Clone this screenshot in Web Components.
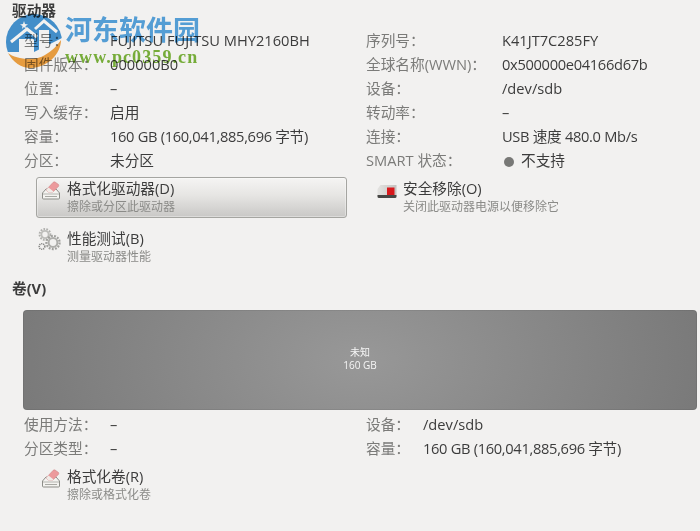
<!DOCTYPE html>
<html>
<head>
<meta charset="utf-8">
<style>
  html, body { margin: 0; padding: 0; background: #f2f1f0; overflow: hidden; }
  body {
    width: 700px; height: 531px; position: relative;
    font-family: "Open Sans", "Noto Sans CJK SC", sans-serif;
    font-size: 14.67px; color: #3c3c3c;
  }
</style>
</head>
<body>
<disk-page></disk-page>
<site-mark></site-mark>

<template id="eraser">
  <svg width="20" height="20" viewBox="0 0 20 20">
    <path d="M1.5 13 L5 9 H15 L18.5 13 V18 Q18.5 19 17.5 19 H2.5 Q1.5 19 1.5 18 Z" fill="#f4f3f0" stroke="#8d8d88"/>
    <path d="M2 14 H18" stroke="#b5b5b0"/>
    <path d="M4 16.5 H16" stroke="#a8a8a3"/>
    <path d="M5 10 L12 2.5 Q13 1.5 14 2 L17.5 4.5 Q18 5.5 17.5 6.2 L12 12 H7 Z" fill="#ec9a9c" stroke="#cf8486" stroke-width=".6"/>
    <path d="M5 10 L7.5 7.5 L12.5 11.5 L12 12 H7 Z" fill="#f0ece8"/>
  </svg>
</template>

<script>
  class InfoRows extends HTMLElement {
    constructor() {
      super();
      this.attachShadow({ mode: "open" });
      this.shadowRoot.innerHTML = `
        <style>
          :host { display: grid; grid-auto-rows: 24px; align-items: center; line-height: 24px; white-space: nowrap; }
          ::slotted(span:nth-child(odd)) { color: #7b7b79; }
        </style>
        <slot></slot>`;
    }
  }

  class ActionItem extends HTMLElement {
    constructor() {
      super();
      this.attachShadow({ mode: "open" });
    }
    connectedCallback() { this.render(); }
    render() {
      const title = this.getAttribute("title") || "";
      const sub = this.getAttribute("sub") || "";
      const icon = this.getAttribute("icon") || "eraser";
      this.shadowRoot.innerHTML = `
        <style>
          :host { display: block; box-sizing: border-box; height: 41px; border: 1px solid transparent; border-radius: 3px; }
          :host([pressed]) {
            border-color: #a5a5a1;
            background: linear-gradient(#f5f4f3, #e6e5e3 45%, #c9c8c6);
            box-shadow: inset 0 0 0 1px rgba(255,255,255,.35);
          }
          .item { display: flex; gap: 6px; padding: 0 0 0 4px; }
          .icon { width: 20px; height: 20px; margin-top: 2px; flex: none; }
          .icon svg { overflow: visible; }
          .t { font-size: 14.67px; line-height: 21px; margin-bottom: 1px; color: #3c3c3c; white-space: nowrap; }
          .s { font-size: 12px; line-height: 14px; color: #8b8b88; white-space: nowrap; }
        </style>
        <div class="item">
          <div class="icon"></div>
          <div><div class="t">${title}</div><div class="s">${sub}</div></div>
        </div>`;
      const holder = this.shadowRoot.querySelector(".icon");
      if (icon === "eraser") {
        holder.append(document.getElementById("eraser").content.cloneNode(true));
      } else if (icon === "gears") {
        holder.innerHTML = `<svg width="20" height="20" viewBox="0 0 20 20" fill="none">
          <circle cx="4" cy="4.5" r="5.4" stroke="#b0b0ad" stroke-width="2" stroke-dasharray="1.7 1.2"/>
          <circle cx="4" cy="4.5" r="3.6" stroke="#bdbdba" stroke-width="1.8"/>
          <circle cx="12" cy="12.5" r="6.6" stroke="#a0a09d" stroke-width="2.2" stroke-dasharray="1.9 1.3"/>
          <circle cx="12" cy="12.5" r="4.4" stroke="#aeaeab" stroke-width="2"/>
          <circle cx="1" cy="16.5" r="2.8" stroke="#8a8a88" stroke-width="1.6" stroke-dasharray="1.2 .8"/>
        </svg>`;
      } else {
        holder.innerHTML = `<svg width="20" height="20" viewBox="0 0 20 20">
          <defs><linearGradient id="b" x1="0" y1="0" x2="1" y2="0"><stop offset="0" stop-color="#e4e3e1"/><stop offset="1" stop-color="#c4c3c0"/></linearGradient></defs>
          <path d="M3.5 5 H19.5 V16 H0.5 V9 Z" fill="url(#b)"/>
          <path d="M0.5 15 H19.5 V16.5 Q19.5 18 18 18 H2 Q0.5 18 0.5 16.5 Z" fill="#474745"/>
          <rect x="10" y="7.5" width="7.5" height="7.5" fill="#d8181c"/>
        </svg>`;
      }
    }
  }

  class VolumeBar extends HTMLElement {
    constructor() {
      super();
      this.attachShadow({ mode: "open" });
      this.shadowRoot.innerHTML = `
        <style>
          :host {
            display: flex; flex-direction: column; align-items: center; justify-content: center;
            box-sizing: border-box; height: 100px; padding-bottom: 2px;
            border-radius: 4px; color: #f6f6f6; font-size: 10px; line-height: 13px;
            background: radial-gradient(ellipse 340px 200px at 50% 50%, #989898, #7a7a7a);
            box-shadow: inset 0 0 0 1px rgba(0,0,0,.06);
          }
        </style>
        <slot></slot>`;
    }
  }

  class SiteMark extends HTMLElement {
    constructor() {
      super();
      this.attachShadow({ mode: "open" });
      this.shadowRoot.innerHTML = `
        <style>
          :host { position: absolute; left: 5px; top: 14px; width: 200px; height: 56px; pointer-events: none; mix-blend-mode: multiply; }
          svg { position: absolute; left: 0; top: 0; }
          .name {
            position: absolute; left: 60px; top: 0; white-space: nowrap;
            font: bold 27px/30px "Noto Sans CJK SC", sans-serif; color: #58a6e2;
          }
          .url {
            position: absolute; left: 60px; top: 33px; white-space: nowrap;
            font: bold 18px/20px "Liberation Serif", serif; color: #7cb63c; letter-spacing: 1.1px;
          }
        </style>
        <svg width="58" height="56" viewBox="0 0 58 56">
          <defs><clipPath id="top"><rect x="0" y="0" width="60" height="38"/></clipPath></defs>
          <circle cx="29" cy="28" r="28" fill="#4696d6" clip-path="url(#top)"/>
          <path d="M14 25 H29 V38 H14 Z M34 16 H44 V38 H34 Z" fill="#fff"/>
          <path d="M3 38 L29 38 L57 24 V38 H3 Z" fill="#fff"/>
          <path d="M6 28 L22 15 L32 23 M30 15 L39 7 L52 18" fill="none" stroke="#fff" stroke-width="3"/>
          <path d="M19 7 L20 10 L23 10.5 L20.5 12 L21 15 L19 13 L17 15 L17.5 12 L15 10.5 L18 10 Z" fill="#fff"/>
          <path d="M3 39 C10 45 30 48 40 41 C47 37 52 32 56 26 C56 40 42 54 26 54 C16 54 8 48 3 39 Z" fill="#f3a544"/>
        </svg>
        <div class="name">河东软件园</div>
        <div class="url">www.pc0359.cn</div>`;
    }
  }

  class DiskPage extends HTMLElement {
    constructor() {
      super();
      this.attachShadow({ mode: "open" });
      this.shadowRoot.innerHTML = `
        <style>
          :host { display: block; padding: 0 3px 0 12px; }
          h2 { margin: 0; font-size: 14.67px; font-weight: 700; color: #3c3c3c; line-height: 20px; }
          .body { padding-left: 12px; }
          .drive { display: grid; grid-template-columns: 86px 256px 136px 1fr; margin-top: 8px; }
          .vol { display: grid; grid-template-columns: 86px 256px 57px 1fr; margin-top: 2px; }
          .tight { letter-spacing: -.32px; }
          .actions { display: grid; grid-template-columns: 311px 1fr; column-gap: 25px; margin: 5px 0 0 12px; }
          .actions.two { margin-top: 9px; }
          .v { margin-top: 10px; }
          volume-bar { margin: 12px 0 0 -1px; }
          .last { width: 311px; margin: 5px 0 0 12px; }
          .dot { display: inline-block; width: 10px; height: 10px; border-radius: 50%; background: #787876; margin: 0 7px 0 2px; vertical-align: -1px; }
        </style>
        <h2>驱动器</h2>
        <div class="body">
          <info-rows class="drive">
            <span>型号：</span><span>FUJITSU FUJITSU MHY2160BH</span><span>序列号：</span><span>K41JT7C285FY</span>
            <span>固件版本：</span><span>000000B0</span><span>全球名称(WWN)：</span><span class="tight">0x500000e04166d67b</span>
            <span>位置：</span><span>–</span><span>设备：</span><span>/dev/sdb</span>
            <span>写入缓存：</span><span>启用</span><span>转动率：</span><span>–</span>
            <span>容量：</span><span class="tight">160 GB (160,041,885,696 字节)</span><span>连接：</span><span class="tight">USB 速度 480.0 Mb/s</span>
            <span>分区：</span><span>未分区</span><span>SMART 状态：</span><span><i class="dot"></i>不支持</span>
          </info-rows>
          <div class="actions">
            <action-item pressed title="格式化驱动器(D)" sub="擦除或分区此驱动器" icon="eraser"></action-item>
            <action-item title="安全移除(O)" sub="关闭此驱动器电源以便移除它" icon="eject"></action-item>
          </div>
          <div class="actions two">
            <action-item title="性能测试(B)" sub="测量驱动器性能" icon="gears"></action-item>
          </div>
        </div>
        <h2 class="v">卷(V)</h2>
        <div class="body">
          <volume-bar><div>未知</div><div>160 GB</div></volume-bar>
          <info-rows class="vol">
            <span>使用方法：</span><span>–</span><span>设备：</span><span>/dev/sdb</span>
            <span>分区类型：</span><span>–</span><span>容量：</span><span class="tight">160 GB (160,041,885,696 字节)</span>
          </info-rows>
          <div class="last">
            <action-item title="格式化卷(R)" sub="擦除或格式化卷" icon="eraser"></action-item>
          </div>
        </div>`;
    }
  }

  customElements.define("info-rows", InfoRows);
  customElements.define("action-item", ActionItem);
  customElements.define("volume-bar", VolumeBar);
  customElements.define("site-mark", SiteMark);
  customElements.define("disk-page", DiskPage);
</script>
</body>
</html>
